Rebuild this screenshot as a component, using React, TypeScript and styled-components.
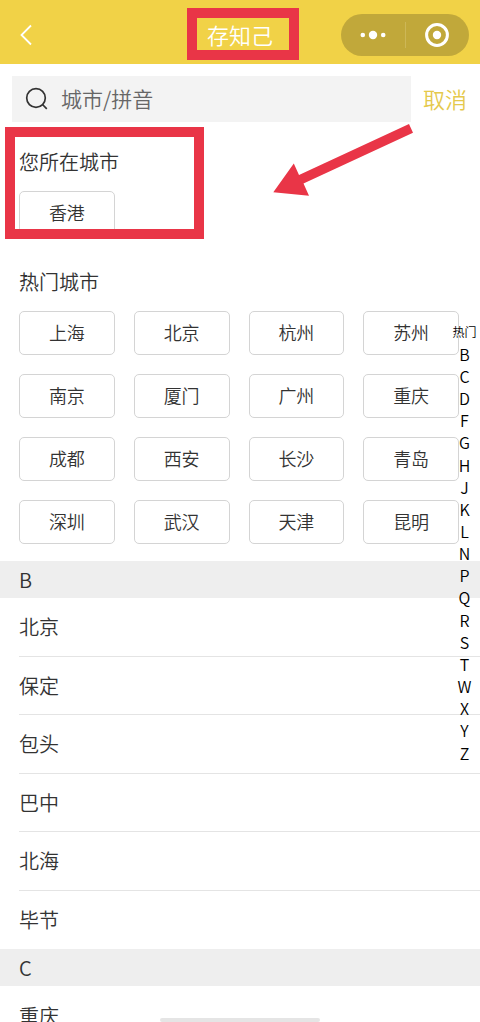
import React from "react";
import styled, { createGlobalStyle } from "styled-components";

const RED = "#e93547";
const YELLOW = "#f1d247";

const GlobalStyle = createGlobalStyle`
  * { box-sizing: border-box; }
  body {
    margin: 0;
    background: #fff;
    color: #333;
    font-family: "Noto Sans CJK SC", "Noto Sans", sans-serif;
    font-weight: 350;
  }
  button, input { font: inherit; color: inherit; }
  button { padding: 0; border: 0; background: none; cursor: pointer; }
  h1, h2, ul { margin: 0; padding: 0; font-weight: inherit; }
`;

const Screen = styled.div`
  display: flex;
  flex-direction: column;
  height: 100vh;
  overflow: hidden;
  position: relative;
`;

const NavBar = styled.header`
  flex: none;
  display: grid;
  grid-template-columns: 1fr auto 1fr;
  align-items: center;
  height: 64px;
  padding: 6px 11px 0;
  background: ${YELLOW};
`;

const BackButton = styled.button`
  display: flex;
  width: 30px;
  height: 28px;
  align-items: center;
  justify-content: center;
`;

const Title = styled.h1`
  position: relative;
  padding-bottom: 2px;
  color: #fff;
  font-size: 22px;
  line-height: 32px;
`;

const TitleMark = styled.span`
  position: absolute;
  inset: -10px -26px -8px -20px;
  border: 10px solid ${RED};
  pointer-events: none;
`;

const Capsule = styled.div`
  justify-self: end;
  display: flex;
  align-items: center;
  width: 128px;
  height: 42px;
  border-radius: 21px;
  background: #c1a83a;
`;

const CapsuleButton = styled.button`
  flex: 1;
  display: flex;
  justify-content: center;
  align-items: center;
  height: 26px;

  & + & { border-left: 1px solid #cdb757; }
`;

const Content = styled.main`
  position: relative;
  flex: 1;
  min-height: 0;
`;

const Scroller = styled.div`
  height: 100%;
  overflow-y: auto;
  scrollbar-width: none;
`;

const SearchBar = styled.form`
  display: flex;
  padding: 12px 13px 0 12px;
  gap: 12px;
`;

const SearchField = styled.label`
  flex: 1;
  display: flex;
  align-items: center;
  gap: 12px;
  height: 46px;
  padding-left: 13px;
  background: #f3f3f3;
`;

const SearchInput = styled.input`
  flex: 1;
  min-width: 0;
  padding: 0 0 2px;
  border: 0;
  outline: 0;
  background: none;
  font-size: 21px;
  line-height: 30px;

  &::placeholder { color: #666; opacity: 1; }
`;

const CancelButton = styled.button`
  padding-bottom: 2px;
  font-size: 22px;
  color: #e5c94c;
`;

const Section = styled.section<{ $top: number; $bottom: number }>`
  position: relative;
  padding: ${(p) => p.$top}px 21px ${(p) => p.$bottom}px 19px;
`;

const SectionTitle = styled.h2`
  margin-bottom: 15px;
  font-size: 20px;
  line-height: 28px;
`;

const CityGrid = styled.div`
  display: grid;
  grid-template-columns: repeat(4, 1fr);
  gap: 19px;
`;

const CityButton = styled.button`
  height: 44px;
  padding-bottom: 2px;
  border: 1px solid #d4d4d4;
  border-radius: 5px;
  background: #fff;
  font-size: 18px;
`;

const SectionMark = styled.span`
  position: absolute;
  top: 5px;
  left: 5px;
  width: 199px;
  height: 112px;
  border: 10px solid ${RED};
  pointer-events: none;
`;

const ArrowMark = styled.svg`
  position: absolute;
  top: 0;
  left: 272px;
  pointer-events: none;
`;

const GroupHeading = styled.h2`
  padding-left: 19px;
  background: #eee;
  font-size: 20px;
  line-height: 37px;
`;

const CityList = styled.ul`
  list-style: none;
  padding-left: 19px;
`;

const CityRow = styled.li`
  display: flex;
  height: 59px;
  border-bottom: 1px solid #e4e4e4;

  &:nth-child(even) { height: 58px; }
  &:last-child { border-bottom: 0; }
`;

const CityRowButton = styled.button`
  flex: 1;
  padding-bottom: 1px;
  text-align: left;
  font-size: 20px;
`;

const IndexBar = styled.nav`
  position: absolute;
  top: 0;
  right: 0;
  bottom: 0;
  display: flex;
  flex-direction: column;
  justify-content: center;
  align-items: center;
  width: 31px;
  padding-bottom: 2px;
  pointer-events: none;
`;

const IndexList = styled.div`
  display: flex;
  flex-direction: column;
  height: 443px;
`;

const IndexLink = styled.a<{ $small?: boolean }>`
  flex: 1;
  display: flex;
  align-items: center;
  justify-content: center;
  color: #000;
  font-size: ${(p) => (p.$small ? 12 : 16)}px;
  line-height: 20px;
  text-decoration: none;
  white-space: nowrap;
  pointer-events: auto;
`;

const HomeIndicator = styled.div`
  position: absolute;
  left: 50%;
  bottom: 0;
  width: 160px;
  height: 4px;
  border-radius: 2px;
  background: #e5e5e5;
  transform: translateX(-50%);
`;

const hotCities = [
  "上海", "北京", "杭州", "苏州",
  "南京", "厦门", "广州", "重庆",
  "成都", "西安", "长沙", "青岛",
  "深圳", "武汉", "天津", "昆明",
];

const groups = [
  { letter: "B", cities: ["北京", "保定", "包头", "巴中", "北海", "毕节"] },
  { letter: "C", cities: ["重庆"] },
];

const letters = "BCDFGHJKLNPQRSTWXYZ".split("");

export default function App() {
  return (
    <Screen>
      <GlobalStyle />
      <NavBar>
        <BackButton aria-label="返回">
          <svg width="14" height="22" viewBox="0 0 14 22" fill="none" stroke="#fff" strokeWidth="1.8">
            <path d="M12 1.5 2.5 11 12 20.5" />
          </svg>
        </BackButton>
        <Title>
          存知己
          <TitleMark />
        </Title>
        <Capsule>
          <CapsuleButton aria-label="更多">
            <svg width="26" height="10" viewBox="0 0 26 10" fill="#fff">
              <circle cx="2.8" cy="5" r="2.3" />
              <circle cx="13" cy="5" r="4.2" />
              <circle cx="23.2" cy="5" r="2.3" />
            </svg>
          </CapsuleButton>
          <CapsuleButton aria-label="关闭">
            <svg width="24" height="24" viewBox="0 0 24 24">
              <circle cx="12" cy="12" r="10.4" fill="none" stroke="#fff" strokeWidth="3" />
              <circle cx="12" cy="12" r="4.2" fill="#fff" />
            </svg>
          </CapsuleButton>
        </Capsule>
      </NavBar>

      <Content>
        <Scroller>
          <SearchBar>
            <SearchField>
              <svg width="24" height="24" viewBox="0 0 24 24" fill="none" stroke="#333" strokeWidth="1.7">
                <circle cx="11" cy="11" r="9.3" />
                <path d="m17.5 17.5 4.3 4.3" />
              </svg>
              <SearchInput type="text" placeholder="城市/拼音" aria-label="城市/拼音" />
            </SearchField>
            <CancelButton type="button">取消</CancelButton>
          </SearchBar>

          <Section $top={26} $bottom={0}>
            <SectionTitle>您所在城市</SectionTitle>
            <CityGrid>
              <CityButton>香港</CityButton>
            </CityGrid>
            <SectionMark />
            <ArrowMark width="144" height="80" viewBox="0 0 144 80" fill={RED}>
              <path d="M1.3 70.3 21.8 41.5 27 53 137 2 141 10.7 31.5 61.5 37 73.7Z" />
            </ArrowMark>
          </Section>

          <Section $top={33} $bottom={17}>
            <SectionTitle id="hot">热门城市</SectionTitle>
            <CityGrid>
              {hotCities.map((city) => (
                <CityButton key={city}>{city}</CityButton>
              ))}
            </CityGrid>
          </Section>

          {groups.map((group) => (
            <section key={group.letter}>
              <GroupHeading id={group.letter}>{group.letter}</GroupHeading>
              <CityList>
                {group.cities.map((city) => (
                  <CityRow key={city}>
                    <CityRowButton>{city}</CityRowButton>
                  </CityRow>
                ))}
              </CityList>
            </section>
          ))}
        </Scroller>

        <IndexBar aria-label="索引">
          <IndexList>
            <IndexLink href="#hot" $small>热门</IndexLink>
            {letters.map((letter) => (
              <IndexLink key={letter} href={`#${letter}`}>{letter}</IndexLink>
            ))}
          </IndexList>
        </IndexBar>
      </Content>
      <HomeIndicator />
    </Screen>
  );
}
